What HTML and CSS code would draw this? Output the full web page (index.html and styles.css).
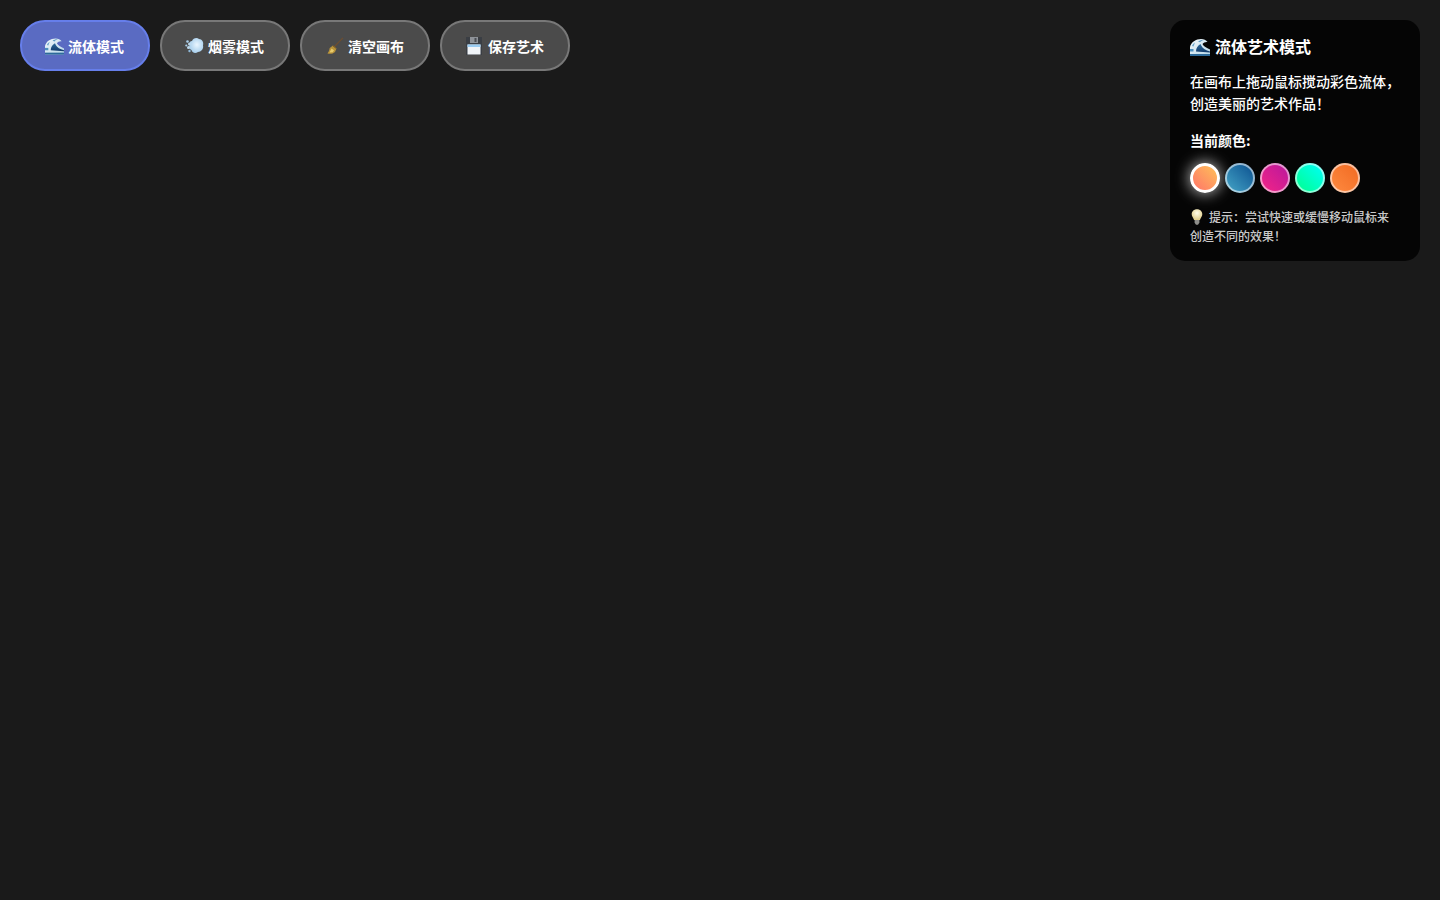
FILE: index.html
```html
<!DOCTYPE html>
<html lang="zh-CN">
<head>
    <meta charset="UTF-8">
    <meta name="viewport" content="width=device-width, initial-scale=1.0">
    <title>流体艺术</title>
    <link rel="stylesheet" href="styles.css">
</head>
<body>
    <!-- Shared emoji drawings -->
    <svg class="defs" aria-hidden="true">
        <defs>
            <linearGradient id="sea" x1="0" y1="0" x2="0" y2="1">
                <stop offset="0" stop-color="#2c6a9a"/>
                <stop offset="1" stop-color="#123a6b"/>
            </linearGradient>
            <linearGradient id="crest" x1="0" y1="0" x2="1" y2="1">
                <stop offset="0" stop-color="#f2f8fb"/>
                <stop offset="1" stop-color="#b4d6e8"/>
            </linearGradient>
            <radialGradient id="puff" cx="0.55" cy="0.45" r="0.6">
                <stop offset="0" stop-color="#eaf6ff"/>
                <stop offset="1" stop-color="#a2cbea"/>
            </radialGradient>
            <radialGradient id="glow" cx="0.5" cy="0.35" r="0.6">
                <stop offset="0" stop-color="#fffde8"/>
                <stop offset="1" stop-color="#e0cf8e"/>
            </radialGradient>
            <symbol id="wave" viewBox="0 0 20 18">
                <path d="M0 18V9C1 4 6 1 11 1c3 0 5 1 6.500 3-2-.3-4 .5-5 2 1 2 3 3.500 7.500 5.500V18z" fill="url(#crest)"/>
                <path d="M6 13.500c0-3.500 2-6 4.500-7.500.8 2.500 3 5 6.500 6.500l3 1v1z" fill="url(#sea)"/>
                <path d="M8 3.500c1.500-1.200 3.500-1.800 6-1.500-1.500.3-3 1-4 2.200z" fill="#5e9cc4"/>
                <path d="M2 8c.5-1.500 1.500-2.700 3-3.500-.5 1.200-1 2.500-1.500 4z" fill="#6aa6cc"/>
                <path d="M0 16h20v2H0z" fill="#2c6a9a"/>
                <path d="M0 11h3.500v2.500H0z" fill="#4c8fbe"/>
            </symbol>
            <symbol id="smoke" viewBox="0 0 19 18">
                <path d="M7 4c1-3 5-4 7-2 3 0 5 3 4 6.500 1 3-2 6.500-5 6.500-3 2-6 .5-6.500-2-2-.5-3-3-2-4.500C4 6 5 4 7 4z" fill="url(#puff)"/>
                <circle cx="2.500" cy="4.500" r="1.300" fill="#a9cde8"/>
                <circle cx="4.500" cy="7" r="1.500" fill="#bcd9ee"/>
                <circle cx="1.300" cy="8.500" r="1.100" fill="#a9cde8"/>
                <circle cx="3.500" cy="10.500" r="1.500" fill="#bcd9ee"/>
                <circle cx="4.500" cy="14" r="1.200" fill="#8fb8d8"/>
            </symbol>
            <symbol id="broom" viewBox="0 0 19 18">
                <path d="M18 .8L9 10" stroke="#6e4e30" stroke-width="1.200" fill="none"/>
                <path d="M8 8.500l3.500 3-1.500 3.500c-2 1.800-5 2.300-7.500 1.500 1-1.500 1.800-3 2.200-5.500z" fill="#b8923a"/>
                <path d="M6.500 11.500l2.500 1.800-1.200 2-3.300.2z" fill="#e8cb6c"/>
                <path d="M7.800 8.800l3.500 2.800" stroke="#7c5f20" stroke-width="1"/>
            </symbol>
            <symbol id="floppy" viewBox="0 0 19 18">
                <path d="M1 0h16v18H1z" fill="#3a3e44"/>
                <path d="M5 0h8v6H5z" fill="#8e9298"/>
                <path d="M9.500 1h2v4h-2z" fill="#4a4e54"/>
                <path d="M2.500 7.500h13v10h-13z" fill="#f0f4f8"/>
                <path d="M2.500 7.500h13v2.500h-13z" fill="#9accf2"/>
            </symbol>
            <symbol id="bulb" viewBox="0 0 14 16">
                <path d="M7 .3c3.200 0 5.300 2.200 5.300 5 0 2.300-1.600 3.400-2.400 5.700H4.100C3.300 8.700 1.700 7.600 1.700 5.300 1.700 2.500 3.800.3 7 .3z" fill="url(#glow)"/>
                <path d="M4.600 11h4.800v2.800L8 15.800H6l-1.400-2z" fill="#8e8e8a"/>
            </symbol>
        </defs>
    </svg>

    <!-- Mode buttons -->
    <div class="controls">
        <button class="btn active"><svg class="emoji"><use href="#wave"/></svg>流体模式</button>
        <button class="btn"><svg class="emoji"><use href="#smoke"/></svg>烟雾模式</button>
        <button class="btn"><svg class="emoji"><use href="#broom"/></svg>清空画布</button>
        <button class="btn"><svg class="emoji"><use href="#floppy"/></svg>保存艺术</button>
    </div>

    <!-- Info panel -->
    <div class="info-panel">
        <h3 class="panel-title"><svg class="emoji-title"><use href="#wave"/></svg>流体艺术模式</h3>
        <p class="panel-desc">在画布上拖动鼠标搅动彩色流体，创造美丽的艺术作品！</p>
        <div class="palette-label">当前颜色:</div>
        <div class="palette">
            <div class="swatch swatch-sunset active"></div>
            <div class="swatch swatch-ocean"></div>
            <div class="swatch swatch-pink"></div>
            <div class="swatch swatch-mint"></div>
            <div class="swatch swatch-orange"></div>
        </div>
        <p class="panel-tip"><svg class="emoji-tip"><use href="#bulb"/></svg>提示：尝试快速或缓慢移动鼠标来创造不同的效果！</p>
    </div>
</body>
</html>
```

FILE: styles.css
```css
* {
    box-sizing: border-box;
}

body {
    margin: 0;
    padding: 20px;
    height: 100vh;
    overflow: hidden;
    background: #1a1a1a;
    color: white;
    font-family: "Noto Sans CJK SC", "Liberation Sans", sans-serif;
    display: flex;
    justify-content: space-between;
    align-items: flex-start;
}

.defs {
    position: absolute;
    width: 0;
    height: 0;
}

.controls {
    display: flex;
    gap: 10px;
}

.btn {
    width: 130px;
    height: 51px;
    padding: 1px 1px 0 0;
    display: flex;
    align-items: center;
    justify-content: center;
    font-family: inherit;
    font-size: 14px;
    font-weight: 700;
    line-height: 17px;
    color: white;
    background: #4b4b4b;
    border: 2px solid #787878;
    border-radius: 25px;
    cursor: pointer;
}

.btn.active {
    background: #5a6bc2;
    border-color: #667eea;
}

.emoji {
    width: 19px;
    height: 18px;
    margin: -1px 4px 0 0;
    flex: none;
}

.info-panel {
    width: 250px;
    padding: 20px 20px 16px;
    background: rgba(0, 0, 0, 0.8);
    border-radius: 15px;
}

.panel-title {
    margin: 0 0 18px;
    height: 12px;
    display: flex;
    align-items: center;
    font-size: 16px;
    font-weight: 700;
    line-height: 12px;
}

.emoji-title {
    width: 20px;
    height: 18px;
    margin: 2px 5px 0 0;
    flex: none;
}

.panel-desc {
    margin: 0 0 15px;
    font-size: 14px;
    font-weight: 500;
    line-height: 22px;
}

.palette-label {
    font-size: 14px;
    font-weight: 700;
    line-height: 22px;
}

.palette {
    display: flex;
    gap: 5px;
    margin-top: 12px;
}

.swatch {
    width: 30px;
    height: 30px;
    border-radius: 50%;
    border: 2px solid rgba(255, 255, 255, 0.55);
    background-origin: border-box;
}

.swatch.active {
    border: 3px solid white;
    box-shadow: 0 0 15px rgba(255, 255, 255, 0.8);
}

.swatch-sunset { background-image: linear-gradient(45deg, #ff6b6b, #feca57); }
.swatch-ocean { background-image: linear-gradient(45deg, #48a9c9, #084c8d); }
.swatch-pink { background-image: linear-gradient(45deg, #f72585, #b5179e); }
.swatch-mint { background-image: linear-gradient(45deg, #00ff88, #00ffff); }
.swatch-orange { background-image: linear-gradient(45deg, #ff8c42, #f06820); }

.panel-tip {
    margin: 14px 0 0;
    font-size: 12px;
    font-weight: 500;
    line-height: 19px;
    color: rgba(255, 255, 255, 0.8);
}

.emoji-tip {
    width: 14px;
    height: 16px;
    margin-right: 5px;
    vertical-align: -3px;
}
```
